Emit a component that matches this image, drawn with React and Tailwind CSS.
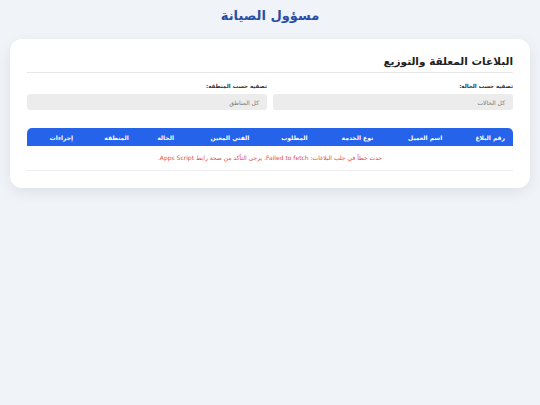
export default function App() {
  const cols = ["رقم البلاغ", "اسم العميل", "نوع الخدمة", "المطلوب", "الفني المعين", "الحالة", "المنطقة", "إجراءات"];
  return (
    <div
      dir="rtl"
      className="min-h-[405px] bg-[#f0f4f8] px-[10px] pt-[6px] pb-6"
      style={{ fontFamily: "'DejaVu Sans', 'Noto Sans', sans-serif" }}
    >
      <h1 className="text-center text-[13px] font-bold text-[#2a4ea6] leading-[20px] mb-[13px]">مسؤول الصيانة</h1>

      <div className="bg-white rounded-[12px] shadow-[0_4px_14px_rgba(0,0,0,0.08)] px-[17px] pt-[15px] pb-[17px]">
        <h2 className="text-[10.5px] font-bold text-[#222] leading-[14px] pb-[4px] border-b border-[#e8e8e8]">
          البلاغات المعلقة والتوزيع
        </h2>

        <div className="grid grid-cols-2 gap-[6px] mt-[9px]">
          <div>
            <label className="block text-[5.5px] font-bold text-[#333] leading-[8px] mb-[4px]">تصفية حسب الحالة:</label>
            <div className="h-[16px] rounded-[3px] bg-[#ececec] px-[8px] flex items-center text-[6px] text-[#777]">كل الحالات</div>
          </div>
          <div>
            <label className="block text-[5.5px] font-bold text-[#333] leading-[8px] mb-[4px]">تصفية حسب المنطقة:</label>
            <div className="h-[16px] rounded-[3px] bg-[#ececec] px-[8px] flex items-center text-[6px] text-[#777]">كل المناطق</div>
          </div>
        </div>

        <table className="w-full mt-[18px] border-collapse">
          <thead>
            <tr className="bg-[#2563eb] text-white">
              {cols.map((c, i) => (
                <th
                  key={c}
                  className={`h-[18px] px-[8px] text-right text-[6px] font-bold whitespace-nowrap ${i === 0 ? "rounded-tr-[5px]" : ""} ${i === cols.length - 1 ? "rounded-tl-[5px]" : ""}`}
                >
                  {c}
                </th>
              ))}
            </tr>
          </thead>
          <tbody>
            <tr className="border-b border-[#eeeeee]">
              <td colSpan={8} className="h-[24px] text-center text-[6px] text-[#e04a4a]">
                حدث خطأ في جلب البلاغات: Failed to fetch. يرجى التأكد من صحة رابط Apps Script.
              </td>
            </tr>
          </tbody>
        </table>
      </div>
    </div>
  );
}
